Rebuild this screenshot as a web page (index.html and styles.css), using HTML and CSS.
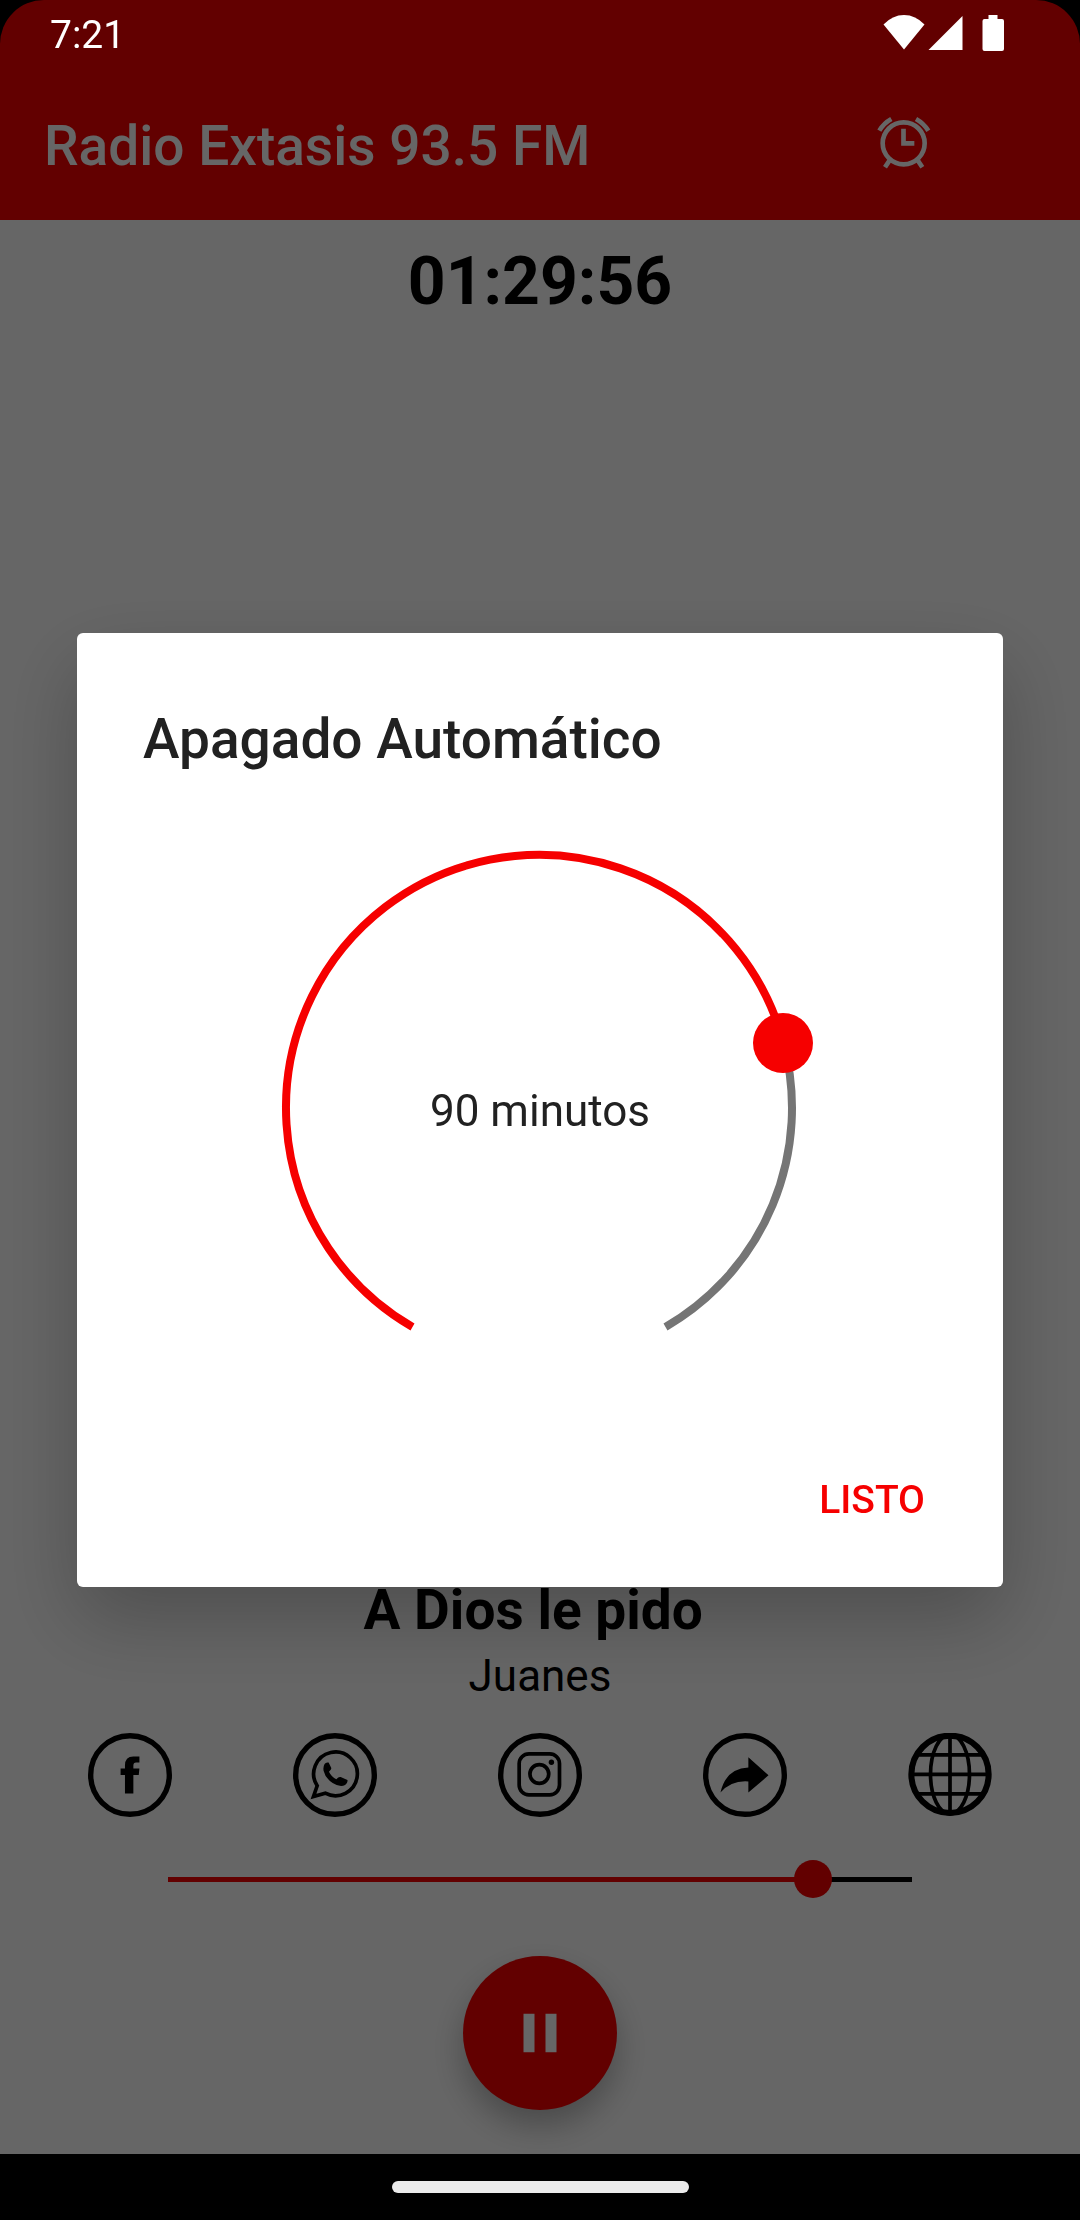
FILE: index.html
```html
<!DOCTYPE html>
<html lang="es">
<head>
<meta charset="utf-8">
<meta name="viewport" content="width=device-width, initial-scale=1">
<title>Radio Extasis 93.5 FM</title>
<link rel="stylesheet" href="styles.css">
</head>
<body>
<div class="screen">
  <header class="header">
    <div class="status">
      <span class="clock">7:21</span>
      <svg class="status-icons" viewBox="0 0 120 36" aria-hidden="true">
        <path d="M0 9.500Q9 0 20.500 0T41 9.500L20.500 34.500Z"/>
        <path d="M45 35L79 1V35Z"/>
        <path d="M105 0h9v4h4.500a2 2 0 0 1 2 2v28a2 2 0 0 1-2 2h-17.500a2 2 0 0 1-2-2V6a2 2 0 0 1 2-2h4Z"/>
      </svg>
    </div>
    <div class="appbar">
      <h1 class="appbar-title">Radio Extasis 93.5 FM</h1>
      <button class="alarm" type="button" aria-label="Apagado automático">
        <svg viewBox="0 0 162 162" fill="none" stroke="currentColor" stroke-width="14" aria-hidden="true">
          <circle cx="80" cy="82" r="63"/>
          <path d="M79.500 38V82H112"/>
          <path d="M37 134L24 154M123 134L136 154M7 44Q20 22 43 9M117 9Q140 22 154 44"/>
        </svg>
      </button>
    </div>
  </header>

  <main class="player">
    <div class="timer">01:29:56</div>
    <section class="controls">
      <h2 class="song">A Dios le pido&nbsp;</h2>
      <p class="artist">Juanes</p>
      <nav class="social">
        <a href="#facebook" aria-label="Facebook">
          <svg viewBox="0 0 250 250" aria-hidden="true">
            <circle class="line thick" cx="125" cy="125" r="117"/>
            <path d="M110 180V125H97V106H110V97Q110 70 135 70H153V88H143Q135 88 135 97V106H153L151 125H135V180Z"/>
          </svg>
        </a>
        <a href="#whatsapp" aria-label="WhatsApp">
          <svg viewBox="0 0 250 250" aria-hidden="true">
            <circle class="line thick" cx="125" cy="125" r="117"/>
            <path class="line" d="M72 157L61 189L96 179A65 65 0 1 0 72 157Z"/>
            <path d="M94 92Q98 86 106 88L114 104Q115 109 107 115Q115 131 129 138Q136 129 142 131L162 140Q164 148 155 155Q140 163 118 149Q96 134 91 112Q89 101 94 92Z"/>
          </svg>
        </a>
        <a href="#instagram" aria-label="Instagram">
          <svg viewBox="0 0 250 250" aria-hidden="true">
            <circle class="line thick" cx="125" cy="125" r="117"/>
            <rect class="line" x="63" y="62" width="120" height="122" rx="29"/>
            <circle class="line" cx="123" cy="122" r="28"/>
            <circle cx="159" cy="87" r="8"/>
          </svg>
        </a>
        <a href="#compartir" aria-label="Compartir">
          <svg viewBox="0 0 250 250" aria-hidden="true">
            <circle class="line thick" cx="125" cy="125" r="117"/>
            <path d="M135 72L195 126L135 177V144Q85 140 52 177Q68 106 135 103Z"/>
          </svg>
        </a>
        <a href="#web" aria-label="Sitio web">
          <svg viewBox="0 0 250 250" aria-hidden="true">
            <circle class="line rim" cx="125" cy="123" r="115"/>
            <ellipse class="line" cx="125" cy="123" rx="58" ry="118"/>
            <path class="line" d="M125 5V241M10 123H240M26 65H224M26 181H224"/>
          </svg>
        </a>
      </nav>
      <input class="volume" type="range" min="0" max="15" value="13" aria-label="Volumen">
      <button class="pause" type="button" aria-label="Pausa">
        <svg viewBox="0 0 24 24" aria-hidden="true"><path d="M6 5h4v14H6zM14 5h4v14h-4z"/></svg>
      </button>
    </section>
  </main>

  <footer class="gesture"><div class="handle"></div></footer>
</div>

<div class="scrim">
  <section class="dialog" role="dialog" aria-modal="true" aria-labelledby="dialog-title">
    <h2 class="dialog-title" id="dialog-title">Apagado Automático</h2>
    <div class="dial">
      <svg viewBox="0 0 600 600" fill="none" stroke-width="8" aria-hidden="true">
        <path class="dial-rest" d="M543.400 234.500A253 253 0 0 1 425.500 519"/>
        <path class="dial-done" d="M172.500 519A253 253 0 1 1 543.400 234.500"/>
        <circle class="dial-knob" cx="543" cy="235" r="30"/>
      </svg>
      <label class="dial-label" for="minutes">90 minutos</label>
      <input class="dial-input" id="minutes" type="range" min="0" max="120" value="90">
    </div>
    <button class="done" type="button">LISTO</button>
  </section>
</div>
</body>
</html>
```
FILE: styles.css
```css
* {
  box-sizing: border-box;
}

:root {
  --red: #f60000;
}

body {
  margin: 0;
  background: #000;
  font-family: Roboto, "Noto Sans", sans-serif;
  font-size: 44px;
  line-height: 52px;
}

h1, h2, p {
  margin: 0;
}

button {
  padding: 0;
  border: 0;
  background: none;
  font: inherit;
  cursor: pointer;
}

svg {
  display: block;
}

.screen {
  display: flex;
  flex-direction: column;
  min-height: 100vh;
  border-radius: 44px 44px 0 0;
  overflow: hidden;
}

/* Top bars */
.header {
  background: var(--red);
  color: #fff;
}

.status {
  position: relative;
  z-index: 2;
  display: flex;
  align-items: center;
  justify-content: space-between;
  height: 66px;
  padding: 0 76px 0 50px;
  font-size: 39px;
}

.clock {
  padding-top: 4px;
}

.status-icons {
  width: 121px;
  height: 36px;
  fill: #fff;
}

.appbar {
  display: flex;
  align-items: center;
  justify-content: space-between;
  height: 154px;
  padding: 0 110px 0 44px;
}

.appbar-title {
  padding-top: 6px;
  font-size: 55px;
  line-height: 64px;
  font-weight: 500;
}

.alarm {
  display: grid;
  place-items: center;
  width: 132px;
  height: 132px;
  color: #fff;
}

.alarm svg {
  width: 54px;
  height: 54px;
}

/* Player */
.player {
  display: flex;
  flex: 1;
  flex-direction: column;
  justify-content: space-between;
  padding: 23px 0 44px;
  background: #fff;
  text-align: center;
}

.timer {
  font-size: 66px;
  line-height: 78px;
  font-weight: 700;
}

.controls {
  display: flex;
  flex-direction: column;
  align-items: center;
}

.song {
  font-size: 55px;
  line-height: 64px;
  font-weight: 700;
}

.artist {
  margin-top: 8px;
}

.social {
  display: flex;
  align-self: stretch;
  margin-top: 31px;
  padding: 0 27px;
}

.social a {
  display: flex;
  flex: 1;
  justify-content: center;
}

.social svg {
  width: 84px;
  height: 84px;
}

.line {
  fill: none;
  stroke: #000;
  stroke-width: 11;
}

.thick {
  stroke-width: 16;
}

.rim {
  stroke-width: 18;
}

.volume {
  width: calc(100% - 298px);
  height: 38px;
  margin: 43px 0 58px;
  appearance: none;
  background: linear-gradient(90deg, var(--red) 86%, #000 86%) center / calc(100% - 38px) 5px no-repeat;
}

.volume::-webkit-slider-thumb {
  width: 38px;
  height: 38px;
  appearance: none;
  border-radius: 50%;
  background: var(--red);
}

.pause {
  display: grid;
  place-items: center;
  width: 154px;
  height: 154px;
  border-radius: 50%;
  background: var(--red);
  box-shadow: 0 16px 32px rgba(0, 0, 0, 0.28);
}

.pause svg {
  width: 66px;
  height: 66px;
  fill: #fff;
}

/* System gesture bar */
.gesture {
  position: relative;
  z-index: 2;
  display: grid;
  place-items: center;
  height: 66px;
  background: #000;
}

.handle {
  width: 297px;
  height: 12px;
  border-radius: 6px;
  background: #ebebeb;
}

/* Sleep timer dialog */
.scrim {
  position: fixed;
  inset: 0;
  z-index: 1;
  display: grid;
  align-items: center;
  padding: 0 77px;
  background: rgba(0, 0, 0, 0.6);
}

.dialog {
  display: flex;
  flex-direction: column;
  padding: 74px 56px 38px 66px;
  border-radius: 6px;
  background: #fff;
  color: #212121;
  box-shadow: 0 32px 80px rgba(0, 0, 0, 0.24);
}

.dialog-title {
  font-size: 55px;
  line-height: 64px;
  font-weight: 500;
}

.dial {
  position: relative;
  display: grid;
  place-items: center;
  align-self: center;
  width: 600px;
  max-width: 100%;
  margin: 37px 10px 42px 0;
}

.dial > svg,
.dial-label {
  grid-area: 1 / 1;
}

.dial > svg {
  width: 100%;
}

.dial-label {
  padding-top: 6px;
}

.dial-rest {
  stroke: #757575;
}

.dial-done {
  stroke: var(--red);
}

.dial-knob {
  fill: var(--red);
}

.dial-input {
  position: absolute;
  inset: 0;
  width: 100%;
  height: 100%;
  margin: 0;
  opacity: 0;
}

.done {
  align-self: flex-end;
  height: 99px;
  padding: 0 22px;
  color: var(--red);
  font-size: 39px;
  font-weight: 500;
}
```
